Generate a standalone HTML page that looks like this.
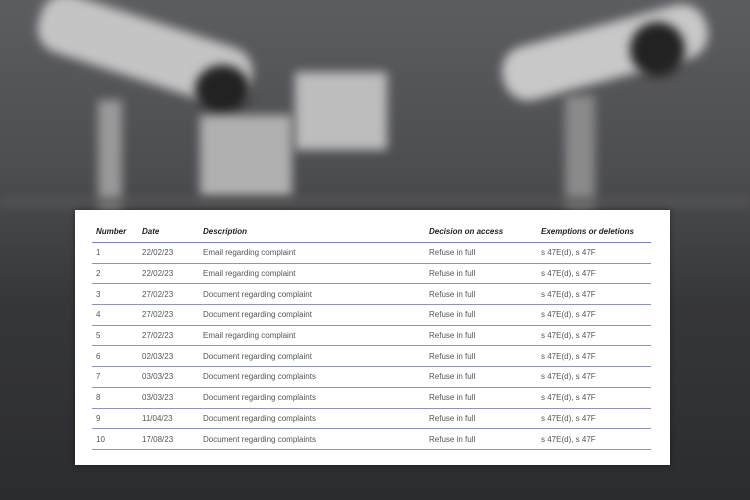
<!DOCTYPE html>
<html><head><style>
html,body{margin:0;padding:0}
body{width:750px;height:500px;position:relative;overflow:hidden;background:#3a3b3f;font-family:"Liberation Sans",sans-serif}
.bg{position:absolute;inset:0;background:linear-gradient(180deg,#5c5d61 0%,#4c4d51 35%,#36373b 60%,#2b2c2f 100%)}
.b{position:absolute;filter:blur(5px)}
.card{position:absolute;left:75px;top:210px;width:595px;height:255px;background:#fff;box-shadow:0 0 6px rgba(0,0,0,.4)}
table{position:absolute;left:17px;top:17px;width:559px;border-collapse:collapse;font-size:8px;color:#555}
th{font-style:italic;font-weight:bold;color:#222;text-align:left;height:15px;padding:0 0 0 4px;border-bottom:1.5px solid #7b83d4;vertical-align:top}
td{height:19.7px;padding:0 0 0 4px;border-bottom:1.5px solid #8e93c4}
</style></head><body>
<div class="bg"></div>
<div class="b" style="left:35px;top:20px;width:220px;height:60px;background:#c4c4c4;border-radius:25px;transform:rotate(18deg)"></div>
<div class="b" style="left:195px;top:65px;width:55px;height:50px;background:#222;border-radius:50%"></div>
<div class="b" style="left:98px;top:100px;width:24px;height:110px;background:#9a9a9a"></div>
<div class="b" style="left:200px;top:115px;width:92px;height:82px;background:#b0b0b0"></div>
<div class="b" style="left:295px;top:72px;width:92px;height:78px;background:#bdbdbd"></div>
<div class="b" style="left:500px;top:25px;width:210px;height:55px;background:#c8c8c8;border-radius:25px;transform:rotate(-15deg)"></div>
<div class="b" style="left:630px;top:22px;width:55px;height:55px;background:#222;border-radius:50%"></div>
<div class="b" style="left:565px;top:95px;width:30px;height:115px;background:#8a8a8a"></div>
<div class="b" style="left:0;top:198px;width:750px;height:8px;background:#555"></div>
<div class="card"><table>
<tr><th style="width:42px">Number</th><th style="width:57px">Date</th><th style="width:222px">Description</th><th style="width:108px">Decision on access</th><th>Exemptions or deletions</th></tr>
<tr><td>1</td><td>22/02/23</td><td>Email regarding complaint</td><td>Refuse in full</td><td>s 47E(d), s 47F</td></tr>
<tr><td>2</td><td>22/02/23</td><td>Email regarding complaint</td><td>Refuse in full</td><td>s 47E(d), s 47F</td></tr>
<tr><td>3</td><td>27/02/23</td><td>Document regarding complaint</td><td>Refuse in full</td><td>s 47E(d), s 47F</td></tr>
<tr><td>4</td><td>27/02/23</td><td>Document regarding complaint</td><td>Refuse in full</td><td>s 47E(d), s 47F</td></tr>
<tr><td>5</td><td>27/02/23</td><td>Email regarding complaint</td><td>Refuse in full</td><td>s 47E(d), s 47F</td></tr>
<tr><td>6</td><td>02/03/23</td><td>Document regarding complaint</td><td>Refuse in full</td><td>s 47E(d), s 47F</td></tr>
<tr><td>7</td><td>03/03/23</td><td>Document regarding complaints</td><td>Refuse in full</td><td>s 47E(d), s 47F</td></tr>
<tr><td>8</td><td>03/03/23</td><td>Document regarding complaints</td><td>Refuse in full</td><td>s 47E(d), s 47F</td></tr>
<tr><td>9</td><td>11/04/23</td><td>Document regarding complaints</td><td>Refuse in full</td><td>s 47E(d), s 47F</td></tr>
<tr><td>10</td><td>17/08/23</td><td>Document regarding complaints</td><td>Refuse in full</td><td>s 47E(d), s 47F</td></tr>
</table></div>
</body></html>
